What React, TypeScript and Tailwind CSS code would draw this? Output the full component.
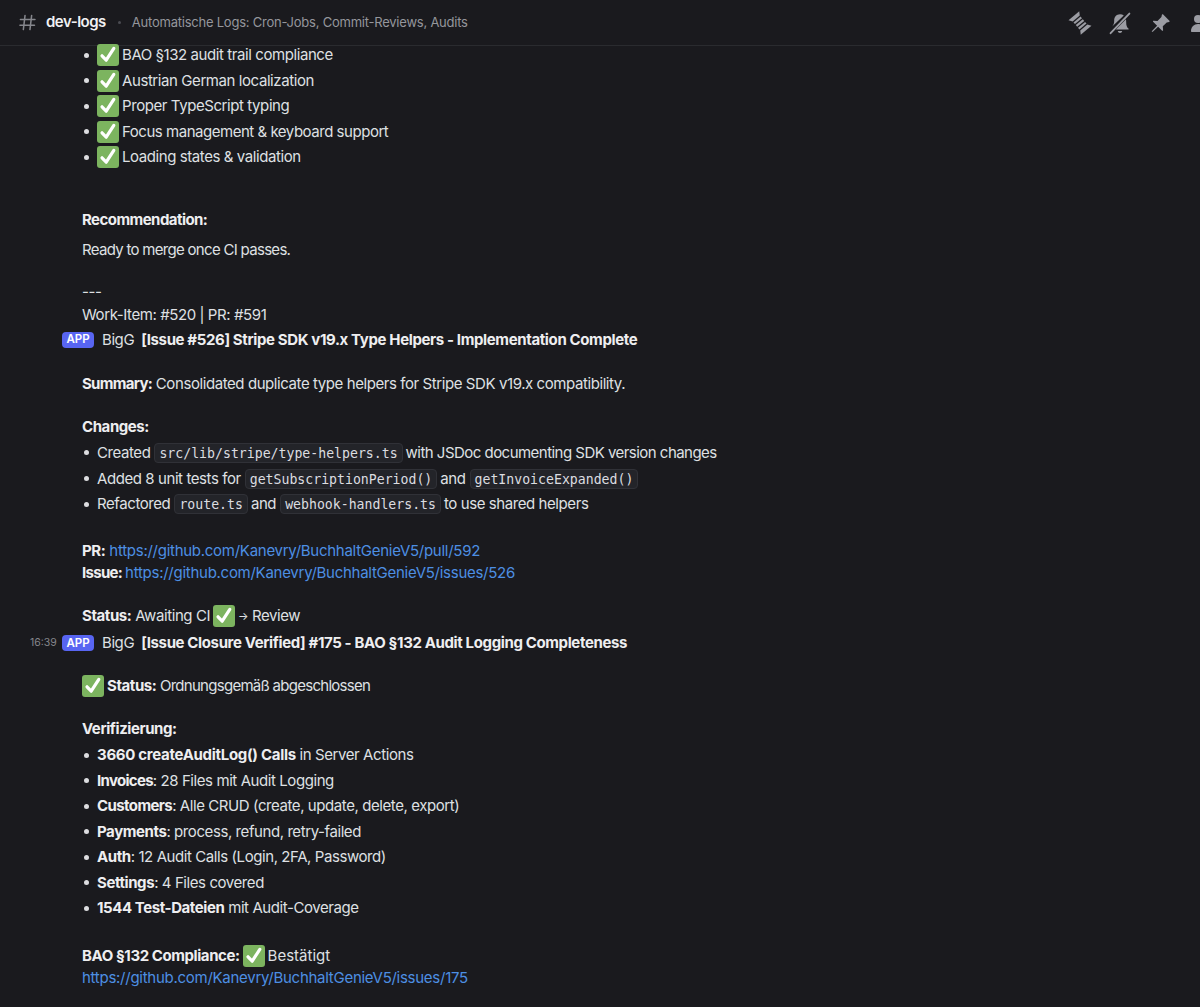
import React from "react";

const Check = ({ className = "" }: { className?: string }) => (
  <svg viewBox="0 0 22 22" className={`inline-block w-[22px] h-[22px] shrink-0 align-middle ${className}`}>
    <rect x="0" y="0" width="22" height="22" rx="3" fill="#7cb45f" />
    <path d="M5 11.8 L9.2 16.2 L16.8 4.4" fill="none" stroke="#fff" strokeWidth="3.2" strokeLinecap="round" strokeLinejoin="round" />
  </svg>
);

const Line = ({ className = "", children }: { className?: string; children: React.ReactNode }) => (
  <div className={`h-[18px] leading-[18px] flex items-center whitespace-pre ${className}`}>{children}</div>
);

const Bullet = ({ children }: { children: React.ReactNode }) => (
  <li className="h-[18px] leading-[18px] flex items-center whitespace-pre">
    <span className="w-[5px] h-[5px] rounded-full bg-[#dcdde0] ml-[2px] mr-[8px] shrink-0" />
    {children}
  </li>
);

const B = ({ children, className = "" }: { children: React.ReactNode; className?: string }) => (
  <b className={`font-bold text-[#eeeef0] ${className}`}>{children}</b>
);

const Code = ({ children }: { children: React.ReactNode }) => (
  <code className="font-['DejaVu_Sans_Mono',monospace] tracking-normal text-[13.2px] leading-[19px] h-[20px] px-[4px] ml-[4px] mr-[3px] rounded-[4px] bg-[#232429] border border-[#303137] text-[#dcdde0]">
    {children}
  </code>
);

const A = ({ children, className = "" }: { children: React.ReactNode; className?: string }) => (
  <a className={`text-[#4d8fe3] tracking-[-0.27px] ${className}`}>{children}</a>
);

const MessageHeader = ({ time, title, className = "" }: { time?: string; title: string; className?: string }) => (
  <div className={`h-[18px] flex items-center whitespace-pre ${className}`}>
    <span className="w-[62px] pl-[30px] text-[10.5px] tracking-normal text-[#85868c] shrink-0">{time}</span>
    <span className="h-[16px] w-[32px] rounded-[4px] bg-[#5865f2] text-white text-[11.5px] tracking-normal font-semibold flex items-center justify-center shrink-0">
      APP
    </span>
    <span className="ml-[8px] text-[#dfe0e3]">BigG</span>
    <span className="ml-[7px] font-bold tracking-[-0.37px] text-[#eeeef0]">{title}</span>
  </div>
);

const ThreadsIcon = () => (
  <svg viewBox="0 0 24 24" className="w-[24px] h-[24px]" fill="#9b9ca3">
    <g transform="rotate(-40 12 12)">
      <path d="M5 2.5h14l-2.4 3.6H7.4z" />
      <path d="M7.4 7.4h9.2v2.2H7.4z" />
      <path d="M7.4 10.9h9.2v2.2H7.4z" />
      <path d="M7.4 14.4h9.2v2.2H7.4z" />
      <path d="M7.4 17.9h9.2l2.4 3.6H5z" />
    </g>
  </svg>
);

const BellOffIcon = () => (
  <svg viewBox="0 0 24 24" className="w-[24px] h-[24px]" fill="#9b9ca3">
    <path d="M12 3.2c-3.6 0-5.8 2.8-5.8 6.2 0 2.8-.6 4.6-2 6L15.8 4.4c-1-.8-2.3-1.2-3.8-1.2z" />
    <path d="M18 8.3 7.8 18.6h12.4c.5 0 .6-.6.2-1-1.6-1.6-2.2-3.4-2.2-6.2 0-1.1-.1-2.2-.2-3.1z" />
    <path d="M9.8 20h4.4c-.2 1.2-1.1 1.9-2.2 1.9S10 21.2 9.8 20z" />
    <path d="M2.6 22.2 21.4 2.6" stroke="#9b9ca3" strokeWidth="1.9" strokeLinecap="round" />
  </svg>
);

const PinIcon = () => (
  <svg viewBox="0 0 24 24" className="w-[24px] h-[24px]" fill="#9b9ca3">
    <path d="M14.2 2.6 21.4 9.8c.4.4.2 1-.3 1.1l-2.4.5-3.9 3.9.3 3.9c0 .5-.5.9-1 .5l-4-4-5.3 5.1c-.6.4-1.2-.2-.8-.8l5.1-5.3-4-4c-.4-.5 0-1 .5-1l3.9.3 3.9-3.9.5-2.4c.1-.5.7-.7 1.1-.3z" />
  </svg>
);

const PeopleIcon = () => (
  <svg viewBox="0 0 24 24" className="w-[24px] h-[24px] shrink-0 ml-[1px]" fill="#9b9ca3">
    <circle cx="9" cy="8" r="4" />
    <path d="M2 20c0-4 3-7 7-7s7 3 7 7c0 .6-.4 1-1 1H3c-.6 0-1-.4-1-1z" />
  </svg>
);

export default function App() {
  return (
    <div className="w-[1200px] h-[1007px] overflow-hidden bg-[#1a1a1e] text-[#dfe0e3] text-[15px] tracking-[-0.42px] font-['Inter','Liberation_Sans',sans-serif]">
      <header className="h-[46px] flex items-center border-b border-[#2a2b2f] overflow-hidden">
        <span className="ml-[19px] w-[27px] shrink-0 text-[#85868c]">
          <svg viewBox="0 0 18 18" className="w-[17px] h-[17px]" fill="none" stroke="#85868c" strokeWidth="1.6" strokeLinecap="round">
            <path d="M6.4 1.5 4.6 16.5M13.4 1.5l-1.8 15M1.5 5.8h15.4M1 12h15.4" />
          </svg>
        </span>
        <h1 className="font-semibold text-[15px] tracking-[-0.5px] text-[#f1f1f3]">dev-logs</h1>
        <span className="ml-[12px] w-[3px] h-[3px] rounded-full bg-[#4b4c52]" />
        <p className="ml-[11px] text-[13px] tracking-[-0.23px] text-[#95969c]">Automatische Logs: Cron-Jobs, Commit-Reviews, Audits</p>
        <div className="ml-auto flex items-center gap-[16px] mr-[-13px]">
          <ThreadsIcon />
          <BellOffIcon />
          <PinIcon />
          <PeopleIcon />
        </div>
      </header>

      <main>
        <div className="pl-[82px]">
          <ul className="flex flex-col gap-[7.6px]">
            <Bullet><Check className="mr-[3px]" />BAO §132 audit trail compliance</Bullet>
            <Bullet><Check className="mr-[3px]" />Austrian German localization</Bullet>
            <Bullet><Check className="mr-[3px]" />Proper TypeScript typing</Bullet>
            <Bullet><Check className="mr-[3px]" /><span className="tracking-[-0.47px]">Focus management &amp; keyboard support</span></Bullet>
            <Bullet><Check className="mr-[3px]" />Loading states &amp; validation</Bullet>
          </ul>
          <Line className="mt-[44.6px]"><B className="tracking-[-0.55px]">Recommendation:</B></Line>
          <Line className="mt-[12px] tracking-[-0.7px]">Ready to merge once CI passes.</Line>
          <Line className="mt-[24px]">---</Line>
          <Line className="mt-[5px]">Work-Item: #520 | PR: #591</Line>
        </div>

        <MessageHeader className="mt-[7px]" title="[Issue #526] Stripe SDK v19.x Type Helpers - Implementation Complete" />
        <div className="pl-[82px]">
          <Line className="mt-[26px]"><B className="tracking-[-0.7px]">Summary:</B> Consolidated duplicate type helpers for Stripe SDK v19.x compatibility.</Line>
          <Line className="mt-[25px]"><B>Changes:</B></Line>
          <ul className="mt-[8px] flex flex-col gap-[7.6px]">
            <Bullet>Created<Code>src/lib/stripe/type-helpers.ts</Code><span className="tracking-[-0.53px]">with JSDoc documenting SDK version changes</span></Bullet>
            <Bullet>Added 8 unit tests for<Code>getSubscriptionPeriod()</Code>and<Code>getInvoiceExpanded()</Code></Bullet>
            <Bullet>Refactored<Code>route.ts</Code>and<Code>webhook-handlers.ts</Code>to use shared helpers</Bullet>
          </ul>
          <Line className="mt-[29px]"><B>PR:</B><A className="ml-[4px]">https://github.com/Kanevry/BuchhaltGenieV5/pull/592</A></Line>
          <Line className="mt-[4px]"><B className="tracking-[-0.7px]">Issue:</B><A className="ml-[3px]">https://github.com/Kanevry/BuchhaltGenieV5/issues/526</A></Line>
          <Line className="mt-[25px]"><B>Status:</B> Awaiting CI<Check className="mx-[3px]" /><span className="text-[11px]">→</span> Review</Line>
        </div>

        <MessageHeader className="mt-[9px]" time="16:39" title="[Issue Closure Verified] #175 - BAO §132 Audit Logging Completeness" />
        <div className="pl-[82px]">
          <Line className="mt-[25px]"><Check className="mr-[3px]" /><B>Status:</B><span className="tracking-[-0.72px]"> Ordnungsgemäß abgeschlossen</span></Line>
          <Line className="mt-[25px]"><B>Verifizierung:</B></Line>
          <ul className="mt-[8px] flex flex-col gap-[7.5px]">
            <Bullet><B className="tracking-[-0.3px]">3660 createAuditLog() Calls</B> in Server Actions</Bullet>
            <Bullet><B className="tracking-[-0.7px]">Invoices</B>: 28 Files mit Audit Logging</Bullet>
            <Bullet><B className="tracking-[-0.6px]">Customers</B>: Alle CRUD (create, update, delete, export)</Bullet>
            <Bullet><B>Payments</B>: process, refund, retry-failed</Bullet>
            <Bullet><B>Auth</B>: 12 Audit Calls (Login, 2FA, Password)</Bullet>
            <Bullet><B>Settings</B>: 4 Files covered</Bullet>
            <Bullet><B>1544 Test-Dateien</B> mit Audit-Coverage</Bullet>
          </ul>
          <Line className="mt-[30px]"><B>BAO §132 Compliance:</B><Check className="mx-[3px]" /><span className="tracking-normal">Bestätigt</span></Line>
          <Line className="mt-[4px]"><A>https://github.com/Kanevry/BuchhaltGenieV5/issues/175</A></Line>
        </div>
      </main>
    </div>
  );
}
